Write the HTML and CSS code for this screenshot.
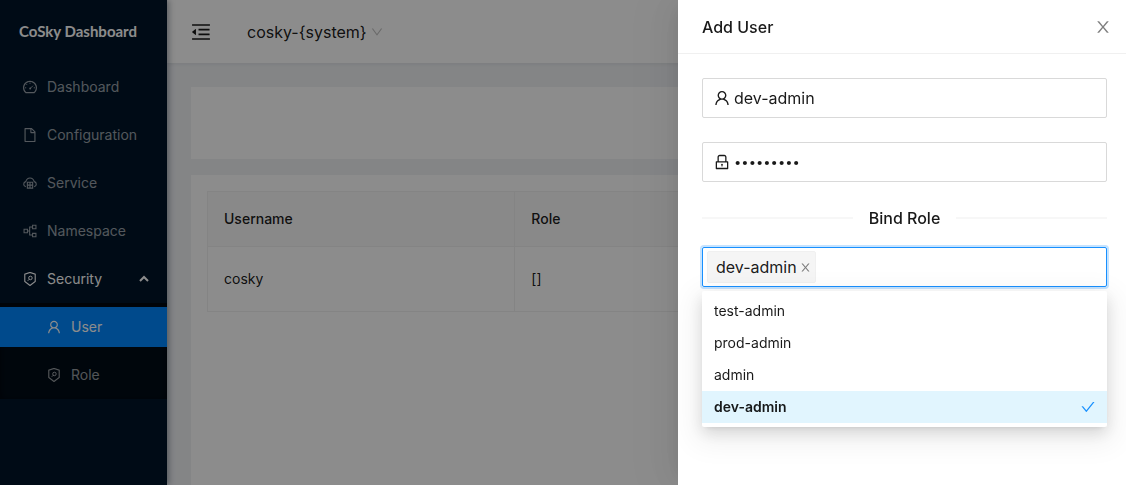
FILE: index.html
```html
<!DOCTYPE html>
<html lang="en">
<head>
<meta charset="utf-8">
<title>CoSky Dashboard</title>
<meta name="viewport" content="width=device-width, initial-scale=1">
<link rel="stylesheet" href="styles.css">
</head>
<body>
<svg class="sprite" aria-hidden="true">
  <symbol id="i-user" viewBox="64 64 896 896"><path d="M858.5 763.6a374 374 0 00-80.6-119.5 375.63 375.63 0 00-119.5-80.6c-.4-.2-.8-.3-1.2-.5C719.5 518 760 444.7 760 362c0-137-111-248-248-248S264 225 264 362c0 82.7 40.5 156 102.8 201.1-.4.2-.8.3-1.2.5-44.8 18.9-85 46-119.5 80.6a375.63 375.63 0 00-80.6 119.5A371.7 371.7 0 00136 901.8a8 8 0 008 8.2h60c4.4 0 7.9-3.5 8-7.8 2-77.2 33-149.5 87.8-204.3 56.7-56.7 132-87.9 212.2-87.9s155.5 31.2 212.2 87.9C779 752.7 810 825 812 902.2c.1 4.4 3.6 7.8 8 7.8h60a8 8 0 008-8.2c-1-47.8-10.9-94.3-29.5-138.2zM512 534c-45.9 0-89.1-17.9-121.6-50.4S340 407.9 340 362c0-45.9 17.9-89.1 50.4-121.6S466.1 190 512 190s89.1 17.9 121.6 50.4S684 316.1 684 362c0 45.9-17.9 89.1-50.4 121.6S557.9 534 512 534z"/></symbol>
  <symbol id="i-lock" viewBox="64 64 896 896"><path d="M832 464h-68V240c0-70.7-57.3-128-128-128H388c-70.7 0-128 57.3-128 128v224h-68c-17.7 0-32 14.3-32 32v384c0 17.7 14.3 32 32 32h640c17.7 0 32-14.3 32-32V496c0-17.7-14.3-32-32-32zM332 240c0-30.9 25.1-56 56-56h248c30.9 0 56 25.1 56 56v224H332V240zm460 600H232V536h560v304zM484 701v53c0 4.400 3.600 8 8 8h40c4.400 0 8-3.600 8-8v-53a48.010 48.010 0 10-56 0z"/></symbol>
  <symbol id="i-fold" viewBox="64 64 896 896"><path d="M408 442h480c4.400 0 8-3.600 8-8v-56c0-4.400-3.600-8-8-8H408c-4.400 0-8 3.600-8 8v56c0 4.400 3.600 8 8 8zm-8 204c0 4.400 3.600 8 8 8h480c4.400 0 8-3.600 8-8v-56c0-4.400-3.600-8-8-8H408c-4.400 0-8 3.600-8 8v56zm504-486H120c-4.400 0-8 3.600-8 8v56c0 4.400 3.600 8 8 8h784c4.400 0 8-3.600 8-8v-56c0-4.400-3.600-8-8-8zm0 632H120c-4.400 0-8 3.600-8 8v56c0 4.400 3.600 8 8 8h784c4.400 0 8-3.600 8-8v-56c0-4.400-3.600-8-8-8zM115.400 518.900L271.700 642c5.800 4.600 14.400.5 14.400-6.900V388.900c0-7.400-8.500-11.500-14.400-6.900L115.400 505.100a8.740 8.740 0 000 13.800z"/></symbol>
  <symbol id="i-file" viewBox="64 64 896 896"><path d="M854.600 288.600L639.400 73.400c-6-6-14.100-9.400-22.600-9.400H192c-17.700 0-32 14.300-32 32v832c0 17.700 14.300 32 32 32h640c17.700 0 32-14.300 32-32V311.300c0-8.500-3.400-16.700-9.400-22.700zM790.200 326H602V137.800L790.200 326zm1.800 562H232V136h302v216a42 42 0 0042 42h216v494z"/></symbol>
  <symbol id="i-down" viewBox="64 64 896 896"><path d="M884 256h-75c-5.100 0-9.900 2.500-12.900 6.600L512 654.200 227.900 262.600c-3-4.100-7.800-6.600-12.900-6.600h-75c-6.500 0-10.300 7.400-6.500 12.700l352.600 486.100c12.800 17.600 39 17.600 51.700 0l352.600-486.100c3.900-5.300.1-12.700-6.400-12.700z"/></symbol>
  <symbol id="i-check" viewBox="64 64 896 896"><path d="M912 190h-69.900c-9.800 0-19.100 4.500-25.100 12.200L404.700 724.500 207 474a32 32 0 00-25.100-12.200H112c-6.700 0-10.400 7.700-6.300 12.900l273.900 347c12.800 16.200 37.400 16.200 50.300 0l488.400-618.900c4.100-5.100.4-12.800-6.300-12.800z"/></symbol>
  <symbol id="i-close" viewBox="64 64 896 896"><path d="M563.800 512l262.500-312.900c4.400-5.200.7-13.100-6.100-13.100h-79.800c-4.700 0-9.200 2.100-12.300 5.700L511.600 449.800 295.100 191.700c-3-3.600-7.500-5.700-12.300-5.700H203c-6.800 0-10.500 7.900-6.100 13.100L459.400 512 196.900 824.900A7.950 7.950 0 00203 838h79.800c4.700 0 9.200-2.100 12.300-5.700l216.500-258.100 216.500 258.100c3 3.600 7.500 5.700 12.300 5.700h79.800c6.800 0 10.500-7.900 6.100-13.100L563.800 512z"/></symbol>
  <symbol id="i-gauge" viewBox="64 64 896 896"><path d="M924.800 385.600a446.700 446.700 0 00-96-142.400 446.700 446.700 0 00-142.400-96C631.100 123.800 572.500 112 512 112s-119.100 11.800-174.400 35.200a446.700 446.700 0 00-142.400 96 446.700 446.700 0 00-96 142.400C75.800 440.900 64 499.500 64 560c0 132.700 58.300 257.700 159.900 343.100l1.700 1.400c5.800 4.800 13.100 7.500 20.600 7.500h531.700c7.500 0 14.800-2.700 20.600-7.500l1.700-1.400C901.700 817.700 960 692.700 960 560c0-60.500-11.900-119.100-35.200-174.400zM761.400 836H262.600A371.120 371.120 0 01140 560c0-99.400 38.700-192.800 109-263 70.300-70.300 163.700-109 263-109 99.400 0 192.800 38.700 263 109 70.300 70.300 109 163.700 109 263 0 105.600-44.500 205.500-122.600 276z"/><g fill="none" stroke="currentColor" stroke-width="58"><path d="M512 232v80M190 563h80M754 563h80M280 330l57 57M540 590l160-160"/></g><circle cx="524" cy="606" r="62"/></symbol>
  <symbol id="i-cloud" viewBox="64 64 896 896"><g fill="none" stroke="currentColor" stroke-width="70"><path d="M245 745A163 163 0 01240 425C285 290 380 195 512 195s227 95 272 230a163 163 0 01-5 320"/><path d="M342 464h340v378H342zM342 650h340M512 464v378"/></g></symbol>
  <symbol id="i-partition" viewBox="64 64 896 896"><g fill="none" stroke="currentColor" stroke-width="68"><path d="M132 404h216v216H132zM676 146h216v216H676zM676 662h216v216H676zM348 512h142M676 254H490v516h186"/></g></symbol>
  <symbol id="i-scan" viewBox="64 64 896 896"><g fill="none" stroke="currentColor"><path stroke-width="72" d="M512 89L846 202v470L512 930 178 672V202z"/><path stroke-width="64" d="M466 526L366 626"/><circle stroke-width="64" cx="540" cy="444" r="112"/></g></symbol>
  <symbol id="i-caret" viewBox="0 0 10 10"><path d="M1 7l4-4 4 4" fill="none" stroke="currentColor" stroke-width="2"/></symbol>
</svg>

<div class="layout">
  <aside class="sider">
    <div class="logo">CoSky Dashboard</div>
    <nav class="menu">
      <a class="menu-item" href="#dashboard"><svg class="icon"><use href="#i-gauge"/></svg>Dashboard</a>
      <a class="menu-item" href="#configuration"><svg class="icon"><use href="#i-file"/></svg>Configuration</a>
      <a class="menu-item" href="#service"><svg class="icon"><use href="#i-cloud"/></svg>Service</a>
      <a class="menu-item" href="#namespace"><svg class="icon"><use href="#i-partition"/></svg>Namespace</a>
      <button class="menu-item menu-open" type="button" aria-expanded="true"><svg class="icon"><use href="#i-scan"/></svg>Security<svg class="caret"><use href="#i-caret"/></svg></button>
      <div class="submenu">
        <a class="menu-item menu-child menu-active" href="#user" aria-current="page"><svg class="icon"><use href="#i-user"/></svg>User</a>
        <a class="menu-item menu-child" href="#role"><svg class="icon"><use href="#i-scan"/></svg>Role</a>
      </div>
    </nav>
  </aside>
  <div class="main">
    <header class="topbar">
      <button class="fold" type="button" aria-label="Collapse menu"><svg><use href="#i-fold"/></svg></button>
      <div class="namespace">
        <select class="namespace-select" aria-label="Namespace"><option>cosky-{system}</option></select>
        <svg class="namespace-arrow"><use href="#i-down"/></svg>
      </div>
    </header>
    <main class="content">
      <section class="card toolbar"></section>
      <section class="card table-card">
        <table class="table">
          <thead><tr><th class="col-name">Username</th><th>Role</th></tr></thead>
          <tbody><tr><td>cosky</td><td>[]</td></tr></tbody>
        </table>
      </section>
    </main>
  </div>
</div>

<div class="mask"></div>

<section class="drawer" role="dialog" aria-labelledby="drawer-title">
  <header class="drawer-header">
    <h2 class="drawer-title" id="drawer-title">Add User</h2>
    <button class="drawer-close" type="button" aria-label="Close"><svg><use href="#i-close"/></svg></button>
  </header>
  <form class="drawer-body">
    <label class="field"><svg class="field-icon"><use href="#i-user"/></svg><input class="field-input" type="text" value="dev-admin" aria-label="Username"></label>
    <label class="field"><svg class="field-icon"><use href="#i-lock"/></svg><input class="field-input field-password" type="password" value="dev-admin" aria-label="Password"></label>
    <h3 class="divider">Bind Role</h3>
    <div class="role-select">
      <div class="role-box">
        <span class="tag">dev-admin<button class="tag-close" type="button" aria-label="Remove dev-admin"><svg><use href="#i-close"/></svg></button></span>
        <input class="role-input" type="text" role="combobox" aria-expanded="true" aria-controls="roles" aria-label="Bind Role">
      </div>
      <ul class="options" id="roles" role="listbox" aria-multiselectable="true">
        <li class="option" role="option" aria-selected="false">test-admin</li>
        <li class="option" role="option" aria-selected="false">prod-admin</li>
        <li class="option" role="option" aria-selected="false">admin</li>
        <li class="option option-selected" role="option" aria-selected="true">dev-admin<svg class="option-check"><use href="#i-check"/></svg></li>
      </ul>
    </div>
  </form>
</section>
</body>
</html>
```
FILE: styles.css
```css
*,
*::before,
*::after {
  box-sizing: border-box;
}

body {
  margin: 0;
  font: 14px/22px Inter, "Liberation Sans", sans-serif;
  color: rgba(0, 0, 0, 0.9);
  background: #f0f2f5;
}

button,
input,
select {
  margin: 0;
  padding: 0;
  border: 0;
  background: none;
  font: inherit;
  color: inherit;
}

svg {
  display: block;
  fill: currentColor;
}

.sprite {
  display: none;
}

.layout {
  display: flex;
  min-height: 100vh;
}

/* Side navigation */
.sider {
  position: relative;
  z-index: 1;
  flex: 0 0 167px;
  background: #001529;
  box-shadow: 2px 0 6px rgba(0, 21, 41, 0.35);
}

.logo {
  padding: 20px 19px;
  color: #fff;
  font: 700 15px/23px Lato, sans-serif;
}

.menu {
  display: flex;
  flex-direction: column;
  gap: 8px;
  padding-top: 4px;
}

.menu-item {
  display: flex;
  align-items: center;
  gap: 10px;
  height: 40px;
  padding: 0 18px 0 23px;
  color: rgba(255, 255, 255, 0.6);
  text-decoration: none;
}

.menu-open,
.menu-active {
  color: #fff;
}

.menu-active {
  background: #0088ff;
}

.menu-child {
  padding-left: 47px;
}

.icon {
  width: 14px;
  height: 14px;
}

.caret {
  width: 10px;
  height: 10px;
  margin-left: auto;
}

.submenu {
  display: flex;
  flex-direction: column;
  gap: 8px;
  margin-top: -4px;
  padding: 4px 0;
  background: #000c17;
  box-shadow: inset 0 2px 8px rgba(0, 0, 0, 0.45);
}

/* Page */
.main {
  flex: 1;
  display: flex;
  flex-direction: column;
}

.topbar {
  display: flex;
  align-items: center;
  gap: 36px;
  height: 63px;
  padding: 0 24px;
  background: #fff;
  box-shadow: 0 1px 4px rgba(0, 21, 41, 0.08);
}

.fold svg {
  width: 20px;
  height: 20px;
}

.namespace {
  display: flex;
  align-items: center;
  gap: 4px;
}

.namespace-select {
  appearance: none;
  font-size: 16px;
  line-height: 24px;
}

.namespace-arrow {
  width: 12px;
  height: 12px;
  color: rgba(0, 0, 0, 0.25);
}

.content {
  flex: 1;
  display: flex;
  flex-direction: column;
  gap: 16px;
  padding: 24px 24px 0;
}

.card {
  padding: 16px;
  background: #fff;
}

.toolbar {
  height: 72px;
}

.table-card {
  flex: 1;
}

.table {
  width: 100%;
  border-collapse: collapse;
  table-layout: fixed;
}

.table th,
.table td {
  padding: 16px;
  border: 1px solid #f0f0f0;
  font-weight: 400;
  text-align: left;
}

.table th {
  height: 55px;
  background: #fafafa;
  font-weight: 500;
}

.table td {
  height: 65px;
}

.table .col-name {
  width: 35%;
}

.mask {
  position: fixed;
  z-index: 2;
  inset: 0;
  background: rgba(0, 0, 0, 0.45);
}

/* Drawer */
.drawer {
  position: fixed;
  z-index: 3;
  inset: 0 0 0 auto;
  width: 448px;
  background: #fff;
  box-shadow: -6px 0 16px -8px rgba(0, 0, 0, 0.08), -9px 0 28px rgba(0, 0, 0, 0.05), -12px 0 48px 16px rgba(0, 0, 0, 0.03);
}

.drawer-header {
  display: flex;
  align-items: center;
  justify-content: space-between;
  height: 54px;
  padding: 0 15px 0 24px;
  border-bottom: 1px solid #f0f0f0;
}

.drawer-title,
.divider {
  margin: 0;
  font-size: 16px;
  font-weight: 500;
  line-height: 24px;
}

.drawer-close {
  color: rgba(0, 0, 0, 0.5);
}

.drawer-close svg {
  width: 16px;
  height: 16px;
}

.drawer-body {
  display: flex;
  flex-direction: column;
  gap: 24px;
  padding: 24px 19px 24px 24px;
}

.field {
  display: flex;
  align-items: center;
  gap: 4px;
  height: 40px;
  padding: 0 11px;
  border: 1px solid #d9d9d9;
  border-radius: 2px;
}

.field-icon {
  width: 16px;
  height: 16px;
}

.field-input {
  flex: 1;
  min-width: 0;
  outline: 0;
  font-size: 16px;
  line-height: 24px;
}

.field-password {
  font-size: 13px;
}

.divider {
  display: flex;
  align-items: center;
  gap: 16px;
}

.divider::before,
.divider::after {
  content: "";
  flex: 1;
  height: 2px;
  background: #f7f7f7;
}

.role-select {
  position: relative;
  margin-top: -7px;
}

.role-box {
  display: flex;
  align-items: center;
  gap: 4px;
  height: 40px;
  padding: 0 4px;
  border: 1px solid #1890ff;
  border-radius: 2px;
  box-shadow: 0 0 0 2px rgba(24, 144, 255, 0.25);
}

.tag {
  display: flex;
  align-items: center;
  gap: 3px;
  height: 32px;
  padding: 0 4px 0 8px;
  border: 1px solid #f0f0f0;
  border-radius: 2px;
  background: #f5f5f5;
  font-size: 16px;
  line-height: 24px;
}

.tag-close {
  color: rgba(0, 0, 0, 0.5);
}

.tag-close svg {
  width: 11px;
  height: 11px;
}

.role-input {
  flex: 1;
  min-width: 0;
  outline: 0;
}

.options {
  position: absolute;
  top: 44px;
  left: 0;
  right: 0;
  margin: 0;
  padding: 4px 0;
  border-radius: 2px;
  background: #fff;
  box-shadow: 0 3px 6px -4px rgba(0, 0, 0, 0.16), 0 6px 16px rgba(0, 0, 0, 0.12), 0 9px 28px 8px rgba(0, 0, 0, 0.06);
  list-style: none;
}

.option {
  display: flex;
  align-items: center;
  justify-content: space-between;
  height: 32px;
  padding: 0 12px;
}

.option-selected {
  background: #e1f5fe;
  font-weight: 600;
}

.option-check {
  width: 14px;
  height: 14px;
  color: #1890ff;
}
```
